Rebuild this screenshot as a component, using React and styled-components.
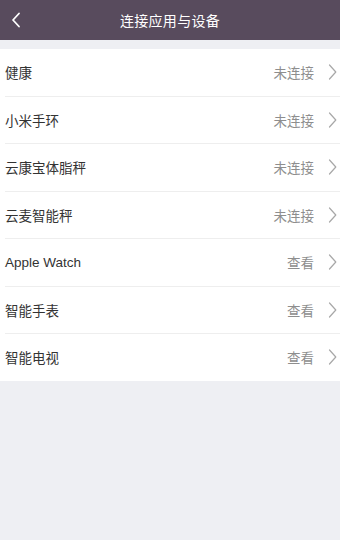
import React from 'react'
import styled, { createGlobalStyle } from 'styled-components'

const GlobalStyle = createGlobalStyle`
  html, body {
    margin: 0;
    padding: 0;
    background: #eeeff3;
  }
  body {
    font-family: "Liberation Sans", "Noto Sans CJK SC", sans-serif;
  }
`

const Page = styled.div`
  width: 340px;
  min-height: 540px;
  background: #eeeff3;
`

const Header = styled.header`
  position: relative;
  height: 40px;
  background: #584b5d;
  display: flex;
  align-items: center;
  justify-content: center;
`

const Title = styled.h1`
  margin: 0;
  color: #ffffff;
  font-size: 14px;
  font-weight: 400;
  letter-spacing: 0.3px;
`

const Back = styled.button`
  position: absolute;
  left: 6px;
  top: 10px;
  width: 20px;
  height: 20px;
  padding: 0;
  border: none;
  background: transparent;
  display: flex;
  align-items: center;
  justify-content: center;
`

const List = styled.ul`
  list-style: none;
  margin: 9px 0 0;
  padding: 0 0 0 5px;
  background: #ffffff;
`

const Row = styled.li`
  height: 46.5px;
  display: flex;
  align-items: center;
  padding-right: 3px;
  border-bottom: ${({ $last }) => ($last ? 'none' : '1px solid #eeeeee')};
`

const Label = styled.span`
  flex: 1;
  color: #333333;
  font-size: 13.5px;
`

const Status = styled.span`
  color: #8e8e8e;
  font-size: 13.5px;
  margin-right: 14px;
`

const Chevron = ({ color = '#a8a8a8' }) => (
  <svg width="9" height="16" viewBox="0 0 9 16" fill="none">
    <path
      d="M1.5 1 L7.8 8 L1.5 15"
      stroke={color}
      strokeWidth="1.2"
      strokeLinecap="round"
      strokeLinejoin="round"
    />
  </svg>
)

const items = [
  { name: '健康', status: '未连接' },
  { name: '小米手环', status: '未连接' },
  { name: '云康宝体脂秤', status: '未连接' },
  { name: '云麦智能秤', status: '未连接' },
  { name: 'Apple Watch', status: '查看' },
  { name: '智能手表', status: '查看' },
  { name: '智能电视', status: '查看' },
]

const App = () => (
  <Page>
    <GlobalStyle />
    <Header>
      <Back aria-label="返回">
        <svg width="10" height="16" viewBox="0 0 10 16" fill="none">
          <path
            d="M8 1.5 L2 8 L8 14.5"
            stroke="#ffffff"
            strokeWidth="1.8"
            strokeLinecap="round"
            strokeLinejoin="round"
          />
        </svg>
      </Back>
      <Title>连接应用与设备</Title>
    </Header>
    <List>
      {items.map((item, i) => (
        <Row key={item.name} $last={i === items.length - 1}>
          <Label>{item.name}</Label>
          <Status>{item.status}</Status>
          <Chevron />
        </Row>
      ))}
    </List>
  </Page>
)

export default App
